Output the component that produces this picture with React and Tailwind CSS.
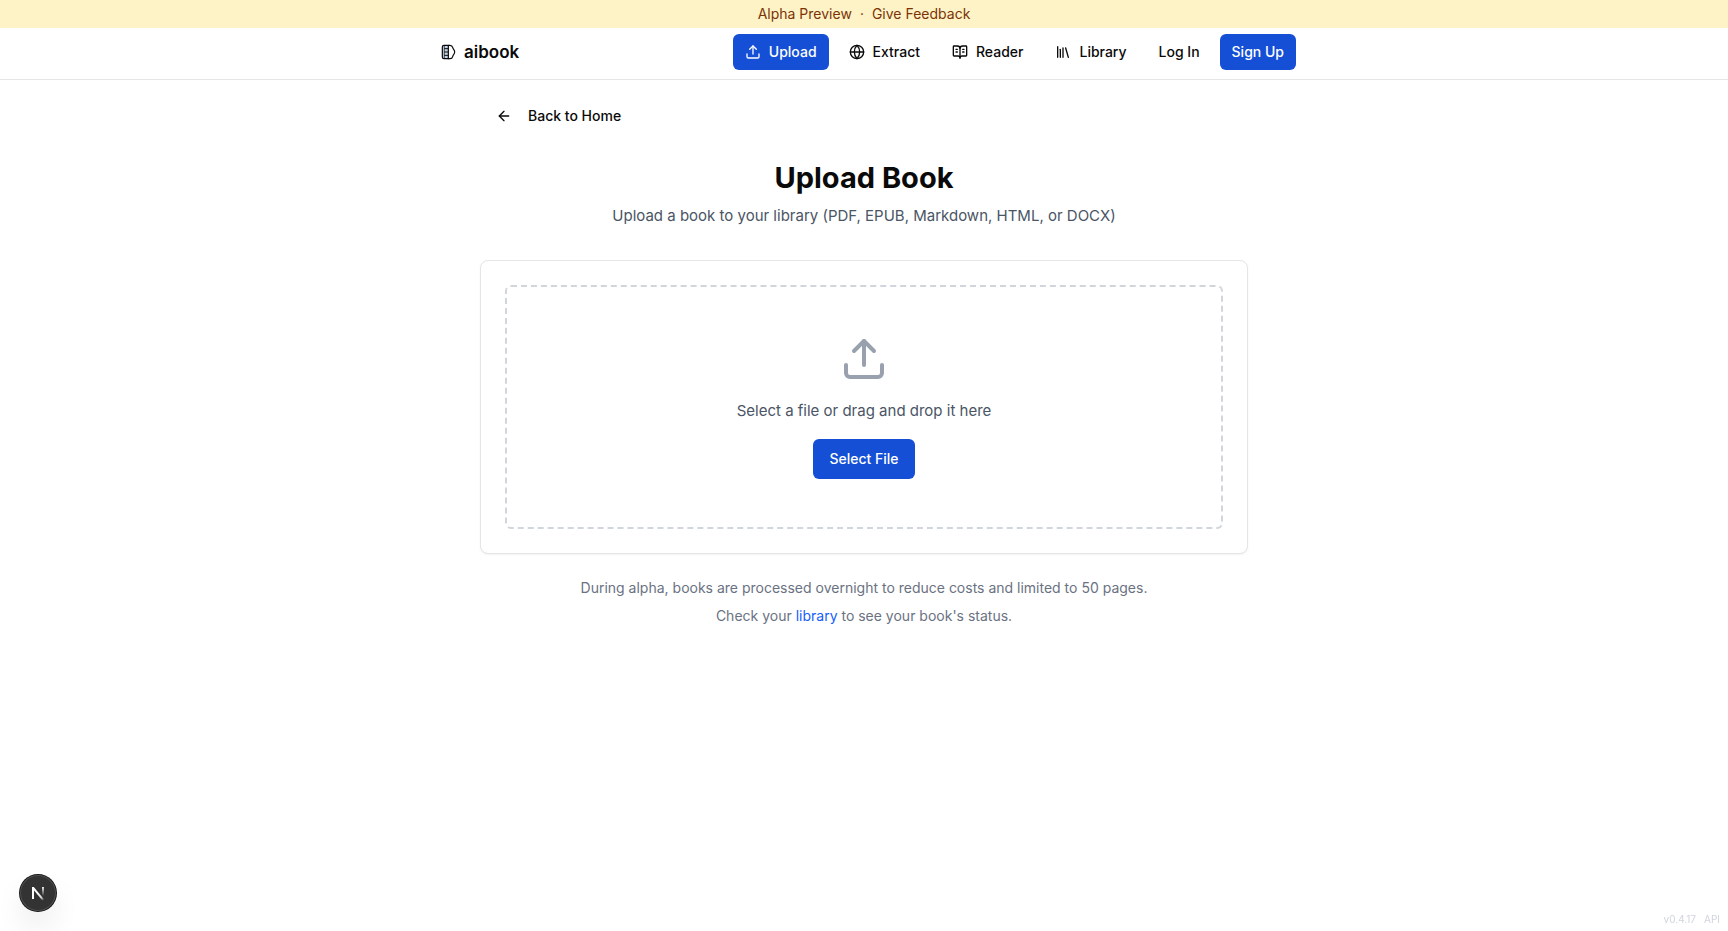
import React, { useState } from 'react';
import { ArrowLeft, BookOpenText, Globe, Library, Upload } from 'lucide-react';

const navItems = [
  { label: 'Upload', href: '#upload', icon: Upload, active: true },
  { label: 'Extract', href: '#extract', icon: Globe },
  { label: 'Reader', href: '#reader', icon: BookOpenText },
  { label: 'Library', href: '#library', icon: Library },
];

// Half book, half brain
const LogoIcon = () => (
  <svg
    className="w-4 h-4"
    viewBox="0 0 24 24"
    fill="none"
    stroke="currentColor"
    strokeWidth="1.800"
    strokeLinecap="round"
    strokeLinejoin="round"
    aria-hidden="true"
  >
    <path d="M12.500 2H6a2.500 2.500 0 0 0-2.500 2.500v15A2.500 2.500 0 0 0 6 22h6.500z" fill="#c3d3e2" />
    <path d="M6.500 2v20" strokeWidth="1" />
    <path d="M7 7h5M7 12h5M7 17h5" strokeWidth="1.500" />
    <path d="M12.500 2H15c2 0 3.500 1.300 4 3.200.200 1 .500 1.800 1.200 2.600C21.500 9.300 22 10.500 22 12s-.500 2.700-1.800 4.200c-.700.800-1 1.600-1.200 2.600-.500 1.900-2 3.200-4 3.200h-2.500" />
  </svg>
);

const Header = () => (
  <header className="border-b border-[#e5e5e5] bg-white">
    <div className="max-w-4xl mx-auto px-4 pt-1.5 pb-[9px] flex items-center justify-between">
      <a href="#home" className="flex items-center gap-2 px-2 text-[17px] leading-7 font-semibold">
        <LogoIcon />
        aibook
      </a>
      <nav className="flex items-center gap-2 text-sm font-medium">
        {navItems.map(({ label, href, icon: Icon, active }) => (
          <a
            key={label}
            href={href}
            className={`h-9 px-3 flex items-center gap-2 rounded-md ${
              active ? 'bg-[#144fd6] text-white' : 'hover:bg-gray-100'
            }`}
          >
            <Icon className="w-4 h-4" />
            {label}
          </a>
        ))}
        <a href="#login" className="h-9 px-3 flex items-center rounded-md hover:bg-gray-100">
          Log In
        </a>
        <a href="#signup" className="h-9 px-3 flex items-center rounded-md bg-[#144fd6] text-white">
          Sign Up
        </a>
      </nav>
    </div>
  </header>
);

const UploadCard = () => {
  const [fileName, setFileName] = useState('');

  const pickFile = () => document.getElementById('book-file').click();

  const handleDrop = (e) => {
    e.preventDefault();
    if (e.dataTransfer.files[0]) setFileName(e.dataTransfer.files[0].name);
  };

  return (
    <div className="mt-8 p-6 rounded-lg border border-[#e5e5e5] bg-white shadow-xs">
      <div
        className="p-12 flex flex-col items-center gap-4 rounded-md border-2 border-dashed border-gray-300"
        onDragOver={(e) => e.preventDefault()}
        onDrop={handleDrop}
      >
        <Upload className="w-12 h-12 text-gray-400" />
        <label htmlFor="book-file" className="text-[15px] leading-6 text-gray-600">
          {fileName || 'Select a file or drag and drop it here'}
        </label>
        <input
          id="book-file"
          type="file"
          accept=".pdf,.epub,.md,.html,.docx"
          className="hidden"
          onChange={(e) => setFileName(e.target.files[0]?.name || '')}
        />
        <button
          type="button"
          className="h-10 px-4 rounded-md bg-[#144fd6] text-sm font-medium text-white"
          onClick={pickFile}
        >
          Select File
        </button>
      </div>
    </div>
  );
};

const DevBadge = () => (
  <button
    type="button"
    aria-label="Open dev tools"
    className="fixed left-5 bottom-5 w-9 h-9 flex items-center justify-center rounded-full bg-[#333333] shadow-[0_0_0_1px_#171717,inset_0_0_0_1px_#ffffff24,0_16px_32px_-8px_#0000003d]"
  >
    <svg className="w-10 h-10 shrink-0" viewBox="0 0 40 40" fill="none" aria-hidden="true">
      <defs>
        <linearGradient id="n-diagonal" x1="20" y1="21" x2="25" y2="27" gradientUnits="userSpaceOnUse">
          <stop stopColor="#fff" />
          <stop offset="0.600" stopColor="#fff" stopOpacity="0.800" />
          <stop offset="1" stopColor="#fff" stopOpacity="0.200" />
        </linearGradient>
        <linearGradient id="n-stem" x1="25" y1="14" x2="25" y2="23" gradientUnits="userSpaceOnUse">
          <stop stopColor="#fff" />
          <stop offset="1" stopColor="#fff" stopOpacity="0" />
        </linearGradient>
      </defs>
      <path d="M15 14.600L25.200 26.800" stroke="url(#n-diagonal)" strokeWidth="2" />
      <path d="M15 14v12" stroke="#fff" strokeWidth="2" />
      <path d="M25 14v9" stroke="url(#n-stem)" strokeWidth="1.800" />
    </svg>
  </button>
);

const App = () => {
  return (
    <div className="min-h-screen bg-white text-[#0a0a0a] font-[Inter,sans-serif]">
      <div className="py-1 flex justify-center gap-2 bg-[#fef3c6] text-sm text-[#7b3306]">
        <span>Alpha Preview</span>
        <span>·</span>
        <a href="#feedback" className="hover:underline">Give Feedback</a>
      </div>

      <Header />

      <main className="max-w-3xl mx-auto py-4">
        <a
          href="#home"
          className="h-10 px-4 inline-flex items-center gap-4 rounded-md text-sm font-medium hover:bg-gray-100"
        >
          <ArrowLeft className="w-4 h-4" />
          Back to Home
        </a>

        <div className="mt-6 text-center">
          <h1 className="text-[29px] leading-9 font-bold">Upload Book</h1>
          <p className="mt-2 text-[15px] leading-6 text-gray-600">
            Upload a book to your library (PDF, EPUB, Markdown, HTML, or DOCX)
          </p>
        </div>

        <UploadCard />

        <div className="mt-6 space-y-2 text-center text-sm text-gray-500">
          <p>During alpha, books are processed overnight to reduce costs and limited to 50 pages.</p>
          <p>
            Check your <a href="#library" className="text-blue-600 hover:underline">library</a> to see your book's status.
          </p>
        </div>
      </main>

      <DevBadge />

      <div className="fixed right-2 bottom-1 flex gap-2 text-[10px] leading-4 text-gray-300">
        <span>v0.4.17</span>
        <a href="#api">API</a>
      </div>
    </div>
  );
};

export default App;
